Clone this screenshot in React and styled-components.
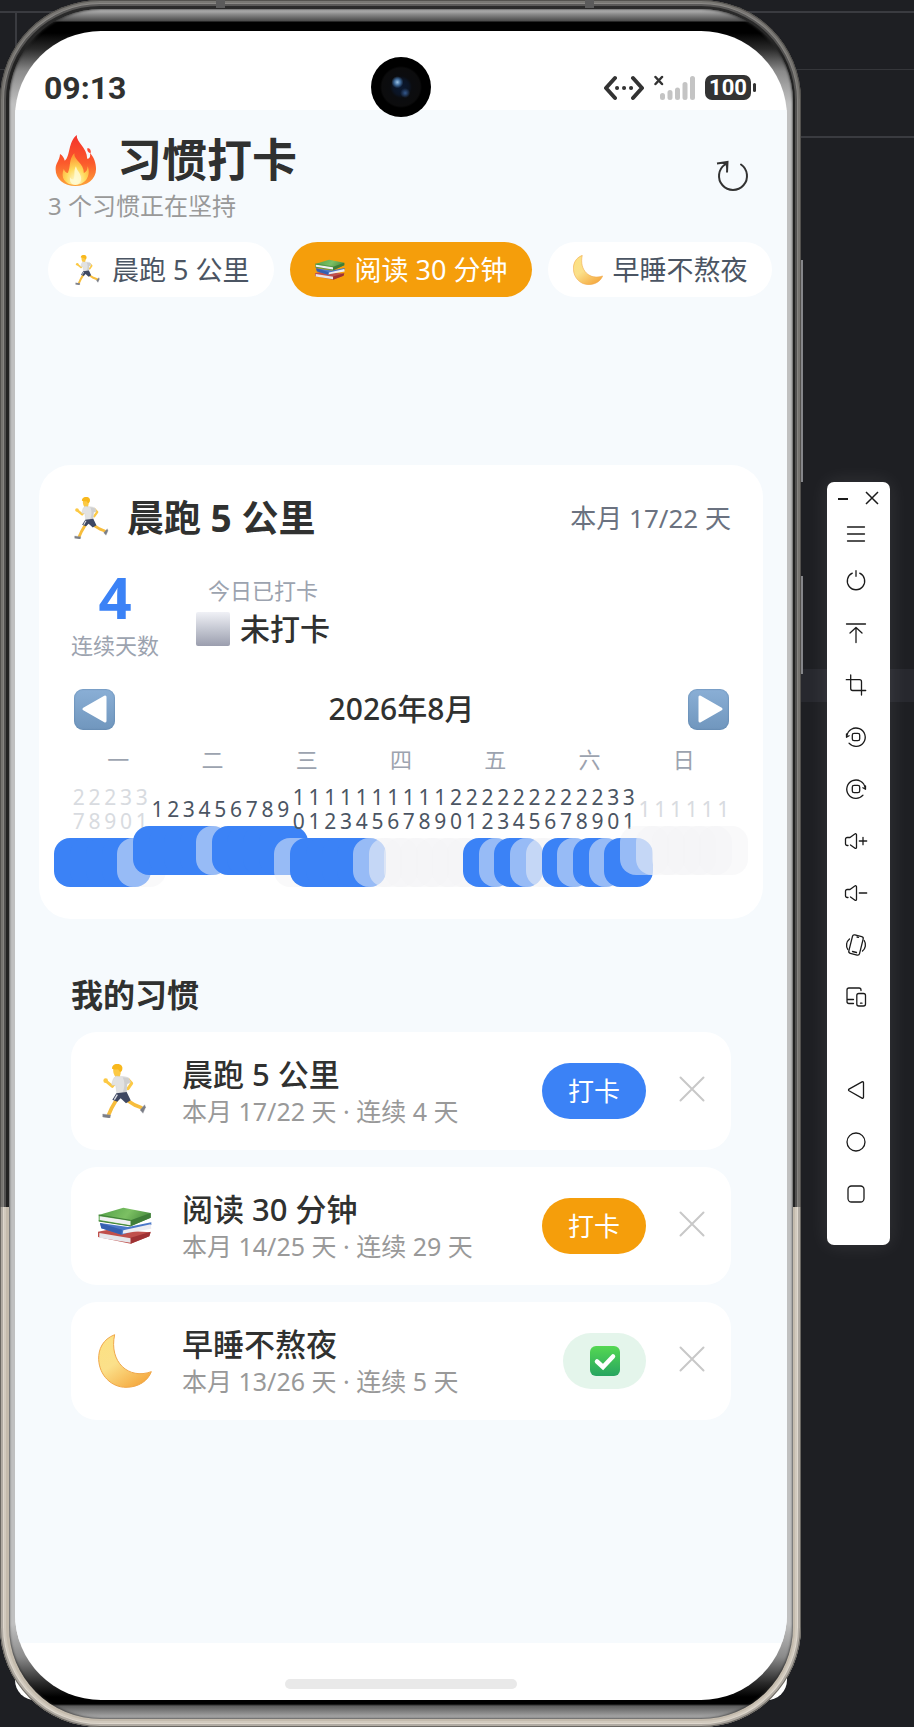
import React from "react";
import styled, { createGlobalStyle } from "styled-components";

const GlobalStyle = createGlobalStyle`
  *, *::before, *::after { box-sizing: border-box; }
  body {
    margin: 0;
    background: #1e1f23;
    font-family: "Noto Sans", "Noto Sans CJK SC", sans-serif;
    color: #303130;
  }
  button {
    font: inherit;
    color: inherit;
    border: 0;
    padding: 0;
    background: none;
    cursor: pointer;
  }
  h1, h2, h3, p, ul { margin: 0; padding: 0; }
  svg { display: block; flex: none; }
`;

/* ---------- desktop and device frame ---------- */

const Desktop = styled.div`
  display: flex;
  align-items: center;
  gap: 26px;
  min-height: 100vh;
  padding-right: 24px;
  position: relative;
  isolation: isolate;
  background:
    linear-gradient(#3a3b40, #3a3b40) 0 11px / 100% 2px no-repeat,
    linear-gradient(#35363a, #35363a) 0 69px / 100% 1px no-repeat,
    linear-gradient(#3a3b40, #3a3b40) 100% 136px / 50% 2px no-repeat,
    linear-gradient(#3a3b40, #3a3b40) 15px 12px / 2px 40px no-repeat,
    linear-gradient(#27282e, #27282e) 100% 669px / 50% 33px no-repeat,
    #1e1f23;
`;

const Phone = styled.div`
  flex: 1;
  min-width: 0;
  align-self: stretch;
  display: flex;
  position: relative;
  padding: 9px 8px 8px 9px;
  border-radius: 100px;
  background: linear-gradient(180deg, #2c2c2c 0, #222 60px, #222 1207px, #c4bbad 1207px, #c4bbad 100%);
  box-shadow:
    inset 0 0 0 1px rgba(60, 58, 55, 0.6),
    inset 0 0 0 3px rgba(90, 86, 80, 0.35),
    inset 0 0 0 4px rgba(255, 252, 244, 0.3),
    inset 0 0 0 6px rgba(255, 252, 244, 0.22);

  &::before {
    content: "";
    position: absolute;
    inset: 31px 14px 27px 15px;
    border-radius: 32px 32px 20px 20px;
    background: #fff;
    z-index: -1;
  }
`;

const SideKey = styled.span`
  position: absolute;
  left: 100%;
  top: ${(p) => p.$top}px;
  width: 2px;
  height: ${(p) => p.$height}px;
  background: #85868a;
`;

const Antenna = styled.span`
  position: absolute;
  top: 0;
  left: ${(p) => p.$left}%;
  width: 9px;
  height: 8px;
  background: #5b5b5b;
`;

const Bezel = styled.div`
  flex: 1;
  min-width: 0;
  display: flex;
  padding: 22px 6px 19px;
  border-radius: 92px;
  background: linear-gradient(
    180deg,
    #c6c6c6 0,
    #8c8c8c 5px,
    #4a4a4a 12px,
    #000 13px,
    #000 24px,
    #2a2a2a 40px,
    #8a8a8a 62px,
    #c0c0c0 95px,
    #c0c0c0 calc(100% - 95px),
    #8a8a8a calc(100% - 62px),
    #2a2a2a calc(100% - 36px),
    #000 calc(100% - 22px),
    #000 calc(100% - 15px),
    #5c5c5c calc(100% - 13px),
    #b5b5b5 100%
  );
  box-shadow: inset 0 0 2px 1px rgba(40, 40, 40, 0.6);
`;

const Screen = styled.div`
  flex: 1;
  min-width: 0;
  display: flex;
  flex-direction: column;
  border-radius: 86px;
  overflow: hidden;
  background: #fff;
`;

const StatusBar = styled.div`
  position: relative;
  display: flex;
  align-items: center;
  justify-content: space-between;
  height: 79px;
  padding: 34px 31px 0 29px;
`;

const Clock = styled.time`
  font-size: 32px;
  line-height: 44px;
  font-family: Roboto, sans-serif;
  font-weight: 700;
`;

const StatusIcons = styled.div`
  display: flex;
  align-items: center;
  gap: 10px;
`;

const Battery = styled.span`
  position: relative;
  display: flex;
  align-items: center;
  justify-content: center;
  width: 46px;
  height: 25px;
  margin-right: 5px;
  border-radius: 7px;
  background: #333;
  color: #fff;
  font-family: Roboto, sans-serif;
  font-size: 22px;
  line-height: 24px;
  font-weight: 700;

  &::after {
    content: "";
    position: absolute;
    left: 48px;
    width: 3px;
    height: 9px;
    border-radius: 2px;
    background: #333;
  }
`;

const Camera = styled.span`
  position: absolute;
  left: 50%;
  top: 26px;
  width: 60px;
  height: 60px;
  margin-left: -30px;
  border-radius: 50%;
  background:
    radial-gradient(circle at 44% 42%, #9cc4e6 0, #3f6a9a 3px, transparent 6px),
    radial-gradient(circle at 57% 60%, #34588c 0, transparent 5px),
    radial-gradient(circle, #0a1830 0, #0b1424 8px, #0b0c0f 11px, #0c0c0d 19px, #000 21px);
`;

const GestureBar = styled.div`
  display: flex;
  justify-content: center;
  align-items: center;
  height: 57px;
  padding-top: 24px;

  &::after {
    content: "";
    width: 30%;
    height: 10px;
    border-radius: 5px;
    background: #e9e9e9;
  }
`;

/* ---------- habit app ---------- */

const Page = styled.main`
  flex: 1;
  padding: 24px 24px 40px;
  background: #f6fafd;
`;

const PageHeader = styled.header`
  display: flex;
  align-items: center;
  justify-content: space-between;
  padding: 0 11px 0 9px;
`;

const PageTitle = styled.h1`
  display: flex;
  align-items: center;
  gap: 20px;
  padding-left: 7px;
  font-size: 45px;
  line-height: 52px;
  font-weight: 700;
`;

const PageNote = styled.p`
  margin-top: 4px;
  font-size: 24px;
  line-height: 32px;
  color: #999;
`;

const IconButton = styled.button`
  display: grid;
  place-items: center;
  width: 40px;
  height: 40px;
  padding-bottom: 4px;
`;

const Chips = styled.div`
  display: flex;
  gap: 16px;
  margin: 20px -24px 0 9px;
`;

const Chip = styled.button`
  display: flex;
  align-items: center;
  gap: 9px;
  height: 55px;
  padding: 0 25px;
  border-radius: 28px;
  white-space: nowrap;
  font-size: 27px;
  line-height: 36px;
  background: ${(p) => (p.$active ? "#f59e0b" : "#fff")};
  color: ${(p) => (p.$active ? "#fff" : "#4b5563")};
`;

const Card = styled.section`
  margin-top: 168px;
  padding: 32px;
  border-radius: 32px;
  background: #fff;
`;

const CardHeader = styled.div`
  display: flex;
  align-items: center;
  justify-content: space-between;
  height: 42px;
`;

const CardTitle = styled.h2`
  display: flex;
  align-items: center;
  gap: 14px;
  font-size: 37px;
  line-height: 42px;
  font-weight: 700;
`;

const CardMeta = styled.span`
  font-size: 26px;
  line-height: 36px;
  color: #6b7280;
`;

const Stats = styled.div`
  display: flex;
  align-items: center;
  gap: 37px;
  margin-top: 28px;
`;

const Stat = styled.div`
  display: flex;
  flex-direction: column;
  align-items: center;
  gap: 4px;
`;

const StatLabel = styled.span`
  font-size: 22px;
  line-height: 28px;
  color: #9ca3af;
`;

const Streak = styled.strong`
  font-size: 58px;
  line-height: 60px;
  font-weight: 700;
  color: #3b82f6;
`;

const Today = styled.span`
  display: flex;
  align-items: center;
  gap: 10px;
  font-size: 30px;
  line-height: 42px;
  font-weight: 500;
`;

const EmptyBox = styled.span`
  width: 34px;
  height: 34px;
  border-radius: 2px;
  background: linear-gradient(180deg, #f0f1f6, #c9ccd6 45%, #9b9eae);
`;

const MonthBar = styled.div`
  display: flex;
  align-items: center;
  justify-content: space-between;
  height: 42px;
  margin-top: 29px;
  padding: 0 2px 0 3px;
`;

const MonthName = styled.h3`
  font-size: 30px;
  line-height: 40px;
  font-weight: 500;
`;

const MonthStep = styled.button`
  display: grid;
  place-items: center;
  width: 41px;
  height: 41px;
  border-radius: 9px;
  background: linear-gradient(180deg, #8aafd6, #7096bd);
  box-shadow: inset 0 0 1px 1px rgba(85, 125, 165, 0.35);
`;

const Weekdays = styled.div`
  display: grid;
  grid-template-columns: repeat(7, 1fr);
  margin-top: 15px;
  text-align: center;
  font-size: 22px;
  line-height: 28px;
  color: #9ca3af;
`;

const Days = styled.div`
  display: grid;
  grid-template-columns: repeat(42, minmax(0, 1fr));
  min-height: 102px;
  margin-top: 12px;
`;

const Day = styled.div`
  display: flex;
  flex-direction: column;
  align-items: center;
  justify-content: center;
  gap: 5px;
`;

const DayNumber = styled.span`
  width: 13px;
  text-align: center;
  word-break: break-all;
  font-size: 21px;
  line-height: 24px;
  color: ${(p) => (p.$outside ? "#d8dbe0" : "#4b5563")};
`;

const DayMark = styled.span`
  flex: none;
  width: 49px;
  height: 49px;
  border-radius: 16px;
  background: ${(p) => (p.$done ? "#3b82f6" : "rgba(243, 244, 246, 0.5)")};
`;

const SectionTitle = styled.h2`
  margin: 56px 32px 17px;
  font-size: 32px;
  line-height: 40px;
  font-weight: 700;
`;

const HabitList = styled.ul`
  display: flex;
  flex-direction: column;
  gap: 17px;
  margin: 0 32px;
  list-style: none;
`;

const HabitRow = styled.li`
  display: flex;
  align-items: center;
  height: 118px;
  padding: 0 19px 0 27px;
  border-radius: 26px;
  background: #fff;
`;

const HabitText = styled.div`
  flex: 1;
  min-width: 0;
  padding-left: 30px;
`;

const HabitName = styled.h3`
  font-size: 31px;
  line-height: 40px;
  font-weight: 500;
`;

const HabitMeta = styled.p`
  font-size: 25px;
  line-height: 34px;
  color: #999;
`;

const PunchButton = styled.button`
  display: grid;
  place-items: center;
  width: ${(p) => (p.$done ? 83 : 104)}px;
  height: 56px;
  margin-right: 26px;
  border-radius: 28px;
  background: ${(p) => p.$color};
  color: #fff;
  font-size: 26px;
  line-height: 36px;
`;

/* ---------- emulator tool strip ---------- */

const Toolbox = styled.aside`
  display: flex;
  flex-direction: column;
  width: 63px;
  padding-bottom: 25px;
  border-radius: 7px;
  background: #fff;
  color: #1b1b1b;
  box-shadow: 0 0 20px rgba(255, 255, 255, 0.1);
`;

const WindowButtons = styled.div`
  display: flex;
  justify-content: space-between;
  padding: 0 7px 0 5px;
`;

const WindowButton = styled.button`
  display: grid;
  place-items: center;
  width: 22px;
  height: 31px;
`;

const ToolButton = styled.button`
  display: grid;
  place-items: center;
  height: ${(p) => (p.$short ? 42 : 52)}px;
  margin-top: ${(p) => (p.$apart ? 41 : 0)}px;
  padding-right: 5px;
`;

/* ---------- drawings ---------- */

function Flame() {
  return (
    <svg width="42" height="51" viewBox="0 0 120 150" aria-hidden="true">
      <defs>
        <linearGradient id="flameOuter" x1="0" y1="0" x2="0" y2="1">
          <stop offset="0" stopColor="#f4322c" />
          <stop offset="0.55" stopColor="#fb5a2c" />
          <stop offset="1" stopColor="#fda33a" />
        </linearGradient>
        <radialGradient id="flameInner" cx="0.5" cy="0.85" r="0.75">
          <stop offset="0" stopColor="#fffbd0" />
          <stop offset="0.5" stopColor="#ffd95a" />
          <stop offset="1" stopColor="#fe9a35" />
        </radialGradient>
      </defs>
      <path fill="url(#flameOuter)" d="M62 0C62 24 92 36 93 70C101 70 103 62 101 53C112 64 119 82 119 100C119 131 92 150 58 150C24 150 0 130 0 100C0 82 12 76 13 56C21 60 25 68 27 76C44 62 36 22 62 0Z" />
      <path fill="#fb4a35" d="M94 38c8 1 11 8 9 16c-7-3-12-9-9-16z" />
      <path fill="url(#flameInner)" d="M55 54C53 74 84 84 83 112C92 108 94 100 94 92C104 112 94 146 58 147C26 147 14 124 24 100C27 108 31 112 36 112C45 94 38 72 55 54Z" />
      <path fill="#fffad2" opacity="0.85" d="M60 92C62 104 75 114 75 128C75 140 68 146 58 146C46 146 40 136 43 124C46 130 50 131 53 130C58 118 52 104 60 92Z" />
    </svg>
  );
}

function Runner({ size }) {
  return (
    <svg width={size} height={size} viewBox="0 0 162 162" aria-hidden="true">
      <g strokeLinecap="round" strokeLinejoin="round" fill="none">
        <path stroke="#f7bd3c" strokeWidth="11" d="M56 106L40 134L32 152" />
        <path stroke="#f7bd3c" strokeWidth="11" d="M86 108L110 123L130 131" />
        <path stroke="#fcc944" strokeWidth="9" d="M90 46L101 58L90 74" />
        <path stroke="#fcc944" strokeWidth="9" d="M52 56L43 67L25 52" />
      </g>
      <circle cx="23" cy="50" r="7" fill="#fcc944" />
      <path fill="#fcc944" d="M46 14h22v14l-3 12h-11c-4-4-10-14-8-26z" />
      <path fill="#e2e2e2" stroke="#c6c6c6" d="M56 36c10 2 26 0 36 6l6 13l-11 5l-2 26l-28 4l-4-26l-12 0c2-14 6-26 15-28z" />
      <path fill="#cfcfcf" d="M74 40l18 3l5 12l-10 5l-2 25l-12 2c8-16 8-34 1-47z" />
      <path fill="#3f4862" d="M55 88l31-4l12 25l-14 9l-16-15l-10 10l-15-6z" />
      <path stroke="#dfe2ea" strokeWidth="4" d="M58 92l-9 15" />
      <path fill="#f8b81d" d="M42 14c-1-17 27-20 31-4c1 8-2 14-7 14l-6-8c-6 2-13 0-18-2z" />
      <path fill="#7b7e87" stroke="#a6a8ae" d="M14 150l24 3l-2 10l-22-4z" />
      <path fill="#7b7e87" stroke="#a6a8ae" d="M126 138l14-16l3 8l-8 18z" />
    </svg>
  );
}

function Books({ size }) {
  return (
    <svg width={size} height={size} viewBox="0 0 162 162" aria-hidden="true">
      <defs>
        <linearGradient id="bookGreen" x1="0" y1="0" x2="1" y2="0.3">
          <stop offset="0" stopColor="#4f9e46" />
          <stop offset="0.6" stopColor="#7cc063" />
          <stop offset="1" stopColor="#4c9040" />
        </linearGradient>
      </defs>
      <path fill="#c0504c" d="M0 98L30 92L158 100L154 112L98 134L0 114Z" />
      <path fill="#e6e6ea" d="M4 102L98 118V131L4 116Z" />
      <path fill="#9e3234" d="M98 116L158 98L154 112L98 134Z" />
      <path fill="#4b78c8" d="M6 72L90 84L160 70V78L72 107L10 88Z" />
      <path fill="#ededf2" d="M76 94L158 76L160 89L74 104Z" />
      <path fill="#3560b0" d="M6 72L72 92L70 107L10 88Z" />
      <path fill="url(#bookGreen)" d="M2 48L76 26L158 42V56L98 82L2 66Z" />
      <path fill="#f0f0f2" d="M5 52L98 66V79L5 63Z" />
      <path fill="#3f7d38" d="M98 64L158 42V56L98 82Z" />
      <path fill="none" stroke="#3f7d38" strokeWidth="3" d="M2 48L98 64M2 66L98 81" />
    </svg>
  );
}

function Moon({ size }) {
  return (
    <svg width={size} height={size} viewBox="0 0 162 162" aria-hidden="true">
      <defs>
        <linearGradient id="moonFill" x1="0.1" y1="0.1" x2="0.7" y2="1">
          <stop offset="0" stopColor="#fce183" />
          <stop offset="0.45" stopColor="#fbe08a" />
          <stop offset="1" stopColor="#f5ab42" />
        </linearGradient>
      </defs>
      <path
        fill="url(#moonFill)"
        stroke="#f0a749"
        strokeWidth="3"
        strokeLinejoin="round"
        d="M50 2C14 16 1 46 2 76C4 124 40 160 84 160C122 160 150 140 160 113C92 138 32 84 50 2Z"
      />
    </svg>
  );
}

function CheckMark() {
  return (
    <svg width="30" height="30" viewBox="0 0 30 30" aria-hidden="true">
      <defs>
        <linearGradient id="checkFill" x1="0" y1="0" x2="0" y2="1">
          <stop offset="0" stopColor="#54d852" />
          <stop offset="1" stopColor="#27a560" />
        </linearGradient>
      </defs>
      <rect width="30" height="30" rx="6" fill="url(#checkFill)" />
      <path d="M7 15.500L13 21L23 10.500" fill="none" stroke="#fff" strokeWidth="4.500" strokeLinecap="round" />
    </svg>
  );
}

function Refresh() {
  return (
    <svg width="34" height="34" viewBox="0 0 34 34" fill="none" stroke="#333" strokeWidth="2" aria-hidden="true">
      <path d="M26 5.500A14 14 0 1 1 10 5.500" strokeLinecap="round" />
      <path d="M2 4.500L12.500 3L12 13.500" />
      <path d="M6 4L12.500 3L12 11L10.500 6Z" fill="#333" stroke="none" />
    </svg>
  );
}

function Cross() {
  return (
    <svg width="26" height="26" viewBox="0 0 26 26" fill="none" stroke="#c8c8c8" strokeWidth="2" strokeLinecap="round" aria-hidden="true">
      <path d="M1.500 1.500L24.500 24.500M24.500 1.500L1.500 24.500" />
    </svg>
  );
}

function Pointer({ left }) {
  return (
    <svg width="30" height="30" viewBox="0 0 30 30" fill="#fff" stroke="#fff" strokeWidth="3" strokeLinejoin="round" aria-hidden="true">
      <path d={left ? "M25 3V27L4 15Z" : "M6 3V27L27 15Z"} />
    </svg>
  );
}

function Transfer() {
  return (
    <svg width="40" height="26" viewBox="0 0 40 26" fill="none" stroke="#333" strokeWidth="4" strokeLinecap="round" strokeLinejoin="round" aria-hidden="true">
      <path d="M11 3L2 13L11 23M29 3L38 13L29 23" />
      <path d="M13 13h.1M20 13h.1M27 13h.1" />
    </svg>
  );
}

function Signal() {
  return (
    <svg width="41" height="26" viewBox="0 0 41 26" fill="none" strokeLinecap="round" aria-hidden="true">
      <path stroke="#333" strokeWidth="2.500" d="M1.500 2L8 9M8 2L1.500 9" />
      <path stroke="#c4c4c4" strokeWidth="5" d="M8.500 20.500v2M16 17.500v5M23.500 15v7.500M31 9.500v13M38.500 3.500v19" />
    </svg>
  );
}

const speaker =
  "M4 16.500H3.200A1.700 1.700 0 0 1 1.500 14.800V10.200A1.700 1.700 0 0 1 3.200 8.500H6L10.800 5A1 1 0 0 1 12.500 5.800V18.500A1 1 0 0 1 11 19.300L6.500 16";

const tools = [
  { label: "菜单", short: true, art: <path d="M3.500 5h17M3.500 12h17M3.500 19h17" /> },
  { label: "电源", art: <path d="M8.300 4.200A8.700 8.700 0 1 0 15.700 4.200M12 1.700v5.600" /> },
  { label: "置顶", art: <path d="M2.500 3h19M12 21.500V6.500M6 12L12 6.500L18 12" /> },
  { label: "截图", art: <path d="M6.700 2V15.500a2 2 0 0 0 2 2H21.700M2.300 6.700H15.500a2 2 0 0 1 2 2V22" /> },
  {
    label: "向左旋转",
    art: (
      <>
        <path d="M2.900 11A9.200 9.200 0 1 1 5 18.200" />
        <path d="M2.500 9v3.300l2.600-1.500" />
        <rect x="8.300" y="8.300" width="7.400" height="7.400" rx="1.800" />
      </>
    ),
  },
  {
    label: "向右旋转",
    art: (
      <>
        <path d="M21.100 11A9.200 9.200 0 1 0 19 18.200" />
        <path d="M21.500 9v3.300l-2.600-1.500" />
        <rect x="8.300" y="8.300" width="7.400" height="7.400" rx="1.800" />
      </>
    ),
  },
  { label: "增大音量", art: <path d={speaker + "M15.300 12h7.400M19 8.300v7.400"} /> },
  { label: "减小音量", art: <path d={speaker + "M15.300 12h7.400"} /> },
  {
    label: "摇一摇",
    art: (
      <>
        <rect x="6.500" y="2.500" width="11" height="19" rx="2" transform="rotate(14 12 12)" />
        <path d="M8.500 18.500l4 1M13 4l1.500.4M5.500 6A8 8 0 0 0 3.800 16.500M18.500 18A8 8 0 0 0 20.200 7.500" />
      </>
    ),
  },
  {
    label: "多设备",
    art: (
      <>
        <path d="M17 5.500V5a2 2 0 0 0-2-2H5a2 2 0 0 0-2 2V16.500a2 2 0 0 0 2 2h4.500M3 14.500h6.500" />
        <rect x="12.800" y="8.500" width="8.700" height="12.500" rx="2" />
        <path d="M16.500 18.200h1.500" />
      </>
    ),
  },
  { label: "返回", apart: true, art: <path d="M19.500 4.800V19.200a1 1 0 0 1-1.500.9L5 12.800a1 1 0 0 1 0-1.700L18 3.900a1 1 0 0 1 1.500.9Z" /> },
  { label: "主页", art: <circle cx="12" cy="12" r="9" /> },
  { label: "最近任务", art: <rect x="4" y="4" width="16" height="16" rx="3.500" /> },
];

/* ---------- data ---------- */

const icons = { run: Runner, read: Books, sleep: Moon };

const habits = [
  { id: "run", name: "晨跑 5 公里", meta: "本月 17/22 天 · 连续 4 天", color: "#3b82f6" },
  { id: "read", name: "阅读 30 分钟", meta: "本月 14/25 天 · 连续 29 天", color: "#f59e0b" },
  { id: "sleep", name: "早睡不熬夜", meta: "本月 13/26 天 · 连续 5 天", color: "#e4f5eb", done: true },
];

const doneCells = new Set([0, 1, 2, 3, 5, 6, 7, 8, 10, 11, 12, 13, 15, 16, 17, 18, 26, 28, 31, 33, 35]);

const dayCells = Array.from({ length: 42 }, (_, i) => ({
  day: i < 5 ? 27 + i : i < 36 ? i - 4 : 1,
  outside: i < 5 || i > 35,
  done: doneCells.has(i),
}));

export default function App() {
  return (
    <>
      <GlobalStyle />
      <Desktop>
        <Phone>
          <SideKey $top={260} $height={222} />
          <SideKey $top={576} $height={98} />
          <Antenna $left={27} />
          <Antenna $left={73} />
          <Bezel>
            <Screen>
              <StatusBar>
                <Clock>09:13</Clock>
                <Camera />
                <StatusIcons>
                  <Transfer />
                  <Signal />
                  <Battery>100</Battery>
                </StatusIcons>
              </StatusBar>
              <Page>
                <PageHeader>
                  <div>
                    <PageTitle>
                      <Flame />
                      习惯打卡
                    </PageTitle>
                    <PageNote>3 个习惯正在坚持</PageNote>
                  </div>
                  <IconButton aria-label="刷新">
                    <Refresh />
                  </IconButton>
                </PageHeader>
                <Chips>
                  {habits.map((h) => {
                    const Icon = icons[h.id];
                    return (
                      <Chip key={h.id} $active={h.id === "read"}>
                        <Icon size={30} />
                        {h.name}
                      </Chip>
                    );
                  })}
                </Chips>
                <Card>
                  <CardHeader>
                    <CardTitle>
                      <Runner size={42} />
                      晨跑 5 公里
                    </CardTitle>
                    <CardMeta>本月 17/22 天</CardMeta>
                  </CardHeader>
                  <Stats>
                    <Stat>
                      <Streak>4</Streak>
                      <StatLabel>连续天数</StatLabel>
                    </Stat>
                    <Stat>
                      <StatLabel>今日已打卡</StatLabel>
                      <Today>
                        <EmptyBox />
                        未打卡
                      </Today>
                    </Stat>
                  </Stats>
                  <MonthBar>
                    <MonthStep aria-label="上个月">
                      <Pointer left />
                    </MonthStep>
                    <MonthName>2026年8月</MonthName>
                    <MonthStep aria-label="下个月">
                      <Pointer />
                    </MonthStep>
                  </MonthBar>
                  <Weekdays>
                    {["一", "二", "三", "四", "五", "六", "日"].map((d) => (
                      <span key={d}>{d}</span>
                    ))}
                  </Weekdays>
                  <Days>
                    {dayCells.map((c, i) => (
                      <Day key={i}>
                        <DayNumber $outside={c.outside}>{c.day}</DayNumber>
                        <DayMark $done={c.done} />
                      </Day>
                    ))}
                  </Days>
                </Card>
                <SectionTitle>我的习惯</SectionTitle>
                <HabitList>
                  {habits.map((h) => {
                    const Icon = icons[h.id];
                    return (
                      <HabitRow key={h.id}>
                        <Icon size={54} />
                        <HabitText>
                          <HabitName>{h.name}</HabitName>
                          <HabitMeta>{h.meta}</HabitMeta>
                        </HabitText>
                        <PunchButton $color={h.color} $done={h.done} aria-label={h.done ? "已打卡" : undefined}>
                          {h.done ? <CheckMark /> : "打卡"}
                        </PunchButton>
                        <IconButton aria-label="删除">
                          <Cross />
                        </IconButton>
                      </HabitRow>
                    );
                  })}
                </HabitList>
              </Page>
              <GestureBar />
            </Screen>
          </Bezel>
        </Phone>
        <Toolbox>
          <WindowButtons>
            <WindowButton aria-label="最小化">
              <svg width="14" height="14" viewBox="0 0 14 14" stroke="currentColor" strokeWidth="2">
                <path d="M2 8h10" />
              </svg>
            </WindowButton>
            <WindowButton aria-label="关闭">
              <svg width="14" height="14" viewBox="0 0 14 14" stroke="currentColor" strokeWidth="1.500">
                <path d="M1 1L13 13M13 1L1 13" />
              </svg>
            </WindowButton>
          </WindowButtons>
          {tools.map((t) => (
            <ToolButton key={t.label} aria-label={t.label} $short={t.short} $apart={t.apart}>
              <svg width="24" height="24" viewBox="0 0 24 24" fill="none" stroke="currentColor" strokeWidth="1.300" strokeLinecap="round" strokeLinejoin="round">
                {t.art}
              </svg>
            </ToolButton>
          ))}
        </Toolbox>
      </Desktop>
    </>
  );
}
